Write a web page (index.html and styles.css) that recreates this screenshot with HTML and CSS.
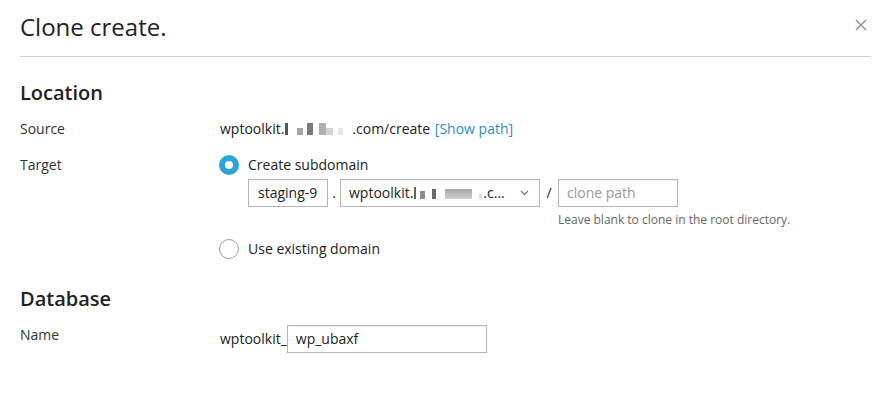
FILE: index.html
```html
<!DOCTYPE html>
<html>
<head>
<meta charset="utf-8">
<link rel="stylesheet" href="styles.css">
</head>
<body>
<div class="dialog">
  <header class="dialog-header">
    <h1 class="dialog-title">Clone create.</h1>
    <button class="close" aria-label="Close">
      <svg width="12" height="12" viewBox="0 0 12 12"><path d="M1 1L11 11M11 1L1 11" stroke="#8a8a8a" stroke-width="1.2" fill="none"/></svg>
    </button>
  </header>
  <section class="section">
    <h2 class="section-title">Location</h2>
    <div class="row">
      <div class="label">Source</div>
      <div class="value">wptoolkit.<span class="blur b1"></span><span class="blur b2"></span><span class="blur b3"></span><span class="blur b4"></span><span class="blur b4b"></span><span class="blur b5"></span>.com/create <a class="link" href="#">[Show path]</a></div>
    </div>
    <div class="row row-target">
      <div class="label">Target</div>
      <div class="value">
        <label class="radio-line">
          <span class="radio checked"></span>
          <span>Create subdomain</span>
        </label>
        <div class="sub-fields">
          <div class="input sub-input">staging-9</div>
          <span class="sep">.</span>
          <div class="input select">
            <span class="select-text">wptoolkit.<span class="blur c1"></span><span class="blur c2"></span><span class="blur c3"></span><span class="blur c4"></span><span class="blur c5"></span>.c...</span>
            <svg width="9" height="6" viewBox="0 0 9 6"><path d="M1 1L4.5 4.5L8 1" stroke="#777" stroke-width="1.1" fill="none"/></svg>
          </div>
          <span class="sep slash">/</span>
          <div class="path-col">
            <div class="input path-input placeholder">clone path</div>
            <div class="hint">Leave blank to clone in the root directory.</div>
          </div>
        </div>
        <label class="radio-line existing">
          <span class="radio"></span>
          <span>Use existing domain</span>
        </label>
      </div>
    </div>
  </section>
  <section class="section db">
    <h2 class="section-title">Database</h2>
    <div class="row row-name">
      <div class="label">Name</div>
      <div class="value name-value">
        <span>wptoolkit_</span>
        <div class="input name-input">wp_ubaxf</div>
      </div>
    </div>
  </section>
</div>
</body>
</html>
```
FILE: styles.css
```css
* { box-sizing: border-box; }
html, body { margin: 0; padding: 0; background: #fff; }
body {
  font-family: "Open Sans", "Liberation Sans", sans-serif;
  font-size: 14px;
  color: #222;
}
.dialog { width: 885px; height: 411px; padding: 0 14px 0 20px; }
.dialog-header {
  display: flex;
  align-items: center;
  justify-content: space-between;
  height: 57px;
  border-bottom: 1px solid #d3d3d3;
}
.dialog-title {
  margin: 0;
  font-size: 24px;
  font-weight: 400;
  color: #222;
  padding-bottom: 4px;
}
.close {
  border: 0; background: none; padding: 0; width: 12px; height: 12px;
  margin-right: 4px; margin-bottom: 6px; display: flex;
}
.section { padding-top: 22px; }
.section-title {
  margin: 0 0 13px;
  font-size: 20px;
  font-weight: 600;
  color: #222;
  line-height: 27px;
}
.row { display: flex; }
.label { width: 200px; color: #333; line-height: 20px; }
.value { line-height: 20px; color: #222; }
.row + .row { margin-top: 16px; }
.link { color: #2b8fc4; text-decoration: none; margin-left: 1px; }
.blur { display: inline-block; height: 12px; vertical-align: -1px; background: #9d9d9d; }
.b1 { width: 3px; background: #555; margin-left: 1px; }
.b2 { width: 6px; height: 7px; margin-left: 9px; background: #a5a5a5; }
.b3 { width: 6px; margin-left: 4px; background: #7a7a7a; }
.b4 { width: 7px; margin-left: 6px; background: #b0b0b0; }
.b4b { width: 7px; height: 7px; background: #d4d4d4; }
.b5 { width: 5px; height: 7px; margin-left: 5px; margin-right: 9px; background: #e6e6e6; }
.radio-line { display: flex; align-items: center; gap: 9px; height: 20px; margin-left: -1px; }
.radio {
  width: 20px; height: 20px; border-radius: 50%;
  border: 1px solid #9d9d9d; background: #fff; flex: none;
}
.radio.checked { border: 6px solid #2aa6dd; }
.sub-fields { display: flex; align-items: flex-start; margin-top: 4px; margin-left: 28px; }
.input {
  height: 28px;
  border: 1px solid #b5b5b5;
  box-shadow: inset 0 1px 1px rgba(0,0,0,0.06);
  padding: 0 8px;
  line-height: 26px;
  font-size: 14px;
  color: #222;
  background: #fff;
}
.sub-input { width: 80px; padding-left: 9px; }
.sep { width: 12px; text-align: center; line-height: 28px; }
.select { width: 200px; display: flex; align-items: center; justify-content: space-between; padding-right: 10px; white-space: nowrap; }
.c1 { width: 2px; background: #666; margin-left: 1px; }
.c2 { width: 5px; height: 8px; margin-left: 4px; background: #8c8c8c; }
.c3 { width: 4px; height: 10px; margin-left: 7px; background: #6a6a6a; }
.c4 { width: 27px; height: 10px; margin-left: 9px; background: linear-gradient(#a8a8a8, #d0d0d0); }
.c5 { width: 3px; height: 5px; margin-left: 7px; margin-right: 1px; background: #dedede; }
.slash { width: 18px; }
.path-input { width: 120px; color: #9a9a9a; }
.hint { font-size: 12px; color: #666; margin-top: 5px; line-height: 16px; }
.existing { margin-top: 11px; }
.db { padding-top: 26px; }
.name-value { display: flex; align-items: center; }
.row-name { margin-top: 1px; }
.name-input { width: 200px; height: 28px; }
```
